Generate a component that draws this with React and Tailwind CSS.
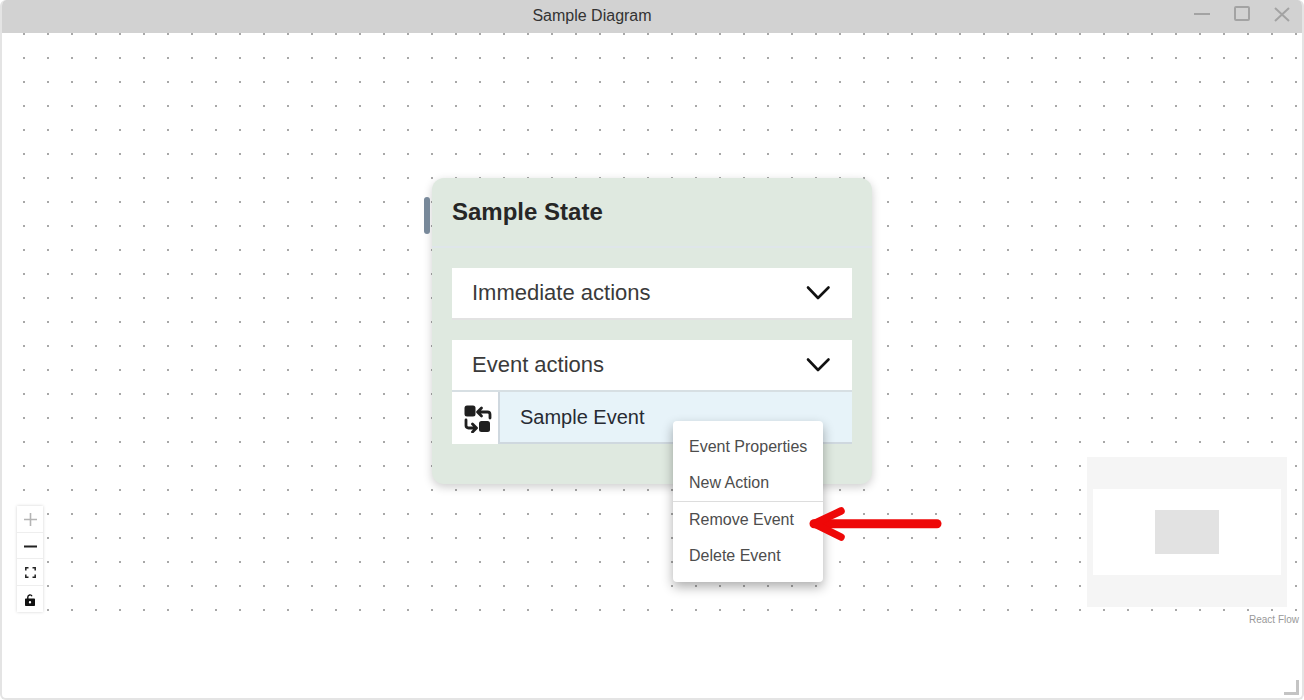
const font = { fontFamily: '"Liberation Sans", Arial, sans-serif' };

function Chevron() {
  return (
    <svg width="26" height="16" viewBox="0 0 26 16" fill="none" stroke="#111" strokeWidth="2.6" strokeLinecap="round" strokeLinejoin="round">
      <path d="M3 2.5 L13 13 L23.5 2.5" />
    </svg>
  );
}

function Accordion({ label, border }) {
  return (
    <div className={`flex h-[52px] items-center justify-between bg-white pl-5 pr-[21px] pb-[1px] border-b-2 ${border}`}>
      <span className="text-[22px] text-[#3a3a3a]">{label}</span>
      <Chevron />
    </div>
  );
}

function EventIcon() {
  return (
    <svg width="28" height="28" viewBox="0 0 28 28" fill="none">
      <rect x="0.5" y="0.5" width="11" height="11" rx="2.5" fill="#1f1f1f" />
      <rect x="15" y="16" width="11" height="11" rx="2.5" fill="#1f1f1f" />
      <path d="M17.5 3 L13.5 7 L17.5 11 M14 7 H23.5 Q26 7 26 9.5 V13" stroke="#1f1f1f" strokeWidth="2.8" strokeLinecap="round" strokeLinejoin="round" />
      <path d="M8.5 19 L12.5 23 L8.5 27 M12 23 H4.5 Q2 23 2 20.5 V15" stroke="#1f1f1f" strokeWidth="2.8" strokeLinecap="round" strokeLinejoin="round" />
    </svg>
  );
}

function MenuItem({ children }) {
  return <div className="flex h-9 items-center pl-4 text-base text-[#4d4d4d]">{children}</div>;
}

function Ctrl({ children, last }) {
  return (
    <div className={`flex h-[26.5px] w-[26px] items-center justify-center bg-white pt-[2px] ${last ? "" : "border-b border-[#eeeeee]"}`}>
      {children}
    </div>
  );
}

export default function App() {
  return (
    <div style={font} className="flex h-[700px] w-[1304px] flex-col overflow-hidden rounded-md border-x-2 border-b-2 border-[#e4e4e4] bg-white">
      <div className="relative flex h-[33px] shrink-0 items-center justify-center bg-[#d2d2d2] pr-[120px] text-base text-[#333333]">
        <span className="-translate-y-[1px]">Sample Diagram</span>
        <div className="absolute right-0 top-0 flex h-full items-center">
          <svg width="108" height="33" viewBox="0 0 108 33" fill="none" stroke="#a3a3a3" strokeWidth="2">
            <path d="M0 14 H16" />
            <rect x="41" y="7" width="14" height="13" rx="1" />
            <path d="M81 8 L95 21 M95 8 L81 21" />
          </svg>
        </div>
      </div>
      <div className="flex min-h-0 flex-1 flex-col">
        <div className="relative h-[593px] shrink-0 bg-white bg-[radial-gradient(circle_at_1px_1px,#a8a8a8_1.2px,transparent_1.2px)] bg-[length:24px_24px] bg-[position:21px_0px]">
          {/* node */}
          <div className="absolute left-[430px] top-[145px] h-[306px] w-[440px] rounded-xl bg-[#dfe9e0] shadow-[0_3px_10px_rgba(0,0,0,0.2)]">
            <div className="absolute -left-[8px] top-[19px] h-[37px] w-[6px] rounded-sm bg-[#78899a]" />
            <div className="flex h-[70px] items-start border-b-2 border-[#dfe6ea] px-5 pt-[19px]">
              <span className="text-2xl leading-[30px] font-bold text-[#262626]">Sample State</span>
            </div>
            <div className="flex flex-col gap-5 px-5 pt-[20px]">
              <Accordion label="Immediate actions" border="border-[#e2e2e2]" />
              <div className="flex flex-col">
                <Accordion label="Event actions" border="border-[#d7dfe3]" />
                <div className="flex h-[52px]">
                  <div className="flex w-[46px] items-start bg-white pl-3 pt-[13px]">
                    <EventIcon />
                  </div>
                  <div className="flex flex-1 items-center border-b-2 border-l-2 border-[#cfd8df] bg-[#e7f3f9] pl-5 text-xl text-[#272b33]">
                    Sample Event
                  </div>
                </div>
              </div>
            </div>
          </div>
          {/* context menu */}
          <div className="absolute left-[671px] top-[388px] w-[150px] rounded-[4px] bg-white py-[8px] shadow-[0_5px_12px_rgba(0,0,0,0.32)]">
            <MenuItem>Event Properties</MenuItem>
            <MenuItem>New Action</MenuItem>
            <div className="border-t border-[#dddddd]" />
            <MenuItem>Remove Event</MenuItem>
            <MenuItem>Delete Event</MenuItem>
          </div>
          {/* arrow */}
          <svg className="absolute left-[806px] top-[472px]" width="134" height="38" viewBox="0 0 134 38" fill="none" stroke="#ee0808" strokeLinecap="round" strokeLinejoin="round">
            <path d="M6 18.7 H129" strokeWidth="9" />
            <path d="M33 6 L6 18.7 L33 32" strokeWidth="7.5" />
          </svg>
          {/* controls */}
          <div className="absolute left-[15px] top-[473px] flex w-[26px] flex-col shadow-[0_0_3px_rgba(0,0,0,0.18)]">
            <Ctrl>
              <svg width="13" height="13" viewBox="0 0 13 13" stroke="#b4b4b4" strokeWidth="1.6"><path d="M6.5 0 V13 M0 6.5 H13" /></svg>
            </Ctrl>
            <Ctrl>
              <svg width="13" height="3" viewBox="0 0 13 3" stroke="#222" strokeWidth="1.8"><path d="M0 1.5 H13" /></svg>
            </Ctrl>
            <Ctrl>
              <svg width="11" height="11" viewBox="0 0 11 11" fill="none" stroke="#222" strokeWidth="1.5"><path d="M.8 3.5 V.8 H3.5 M7.5 .8 H10.2 V3.5 M10.2 7.5 V10.2 H7.5 M3.5 10.2 H.8 V7.5" /></svg>
            </Ctrl>
            <Ctrl last>
              <svg width="10" height="12" viewBox="0 0 10 12" fill="none"><path d="M2.8 5 V3 A2.2 2.2 0 0 1 7 2.2" stroke="#111" strokeWidth="1.4" /><path fillRule="evenodd" d="M.8 4.5 H9.2 Q10 4.5 10 5.3 V11.2 Q10 12 9.2 12 H.8 Q0 12 0 11.2 V5.3 Q0 4.5 .8 4.5 Z M5 7 A1.2 1.2 0 1 0 5 9.4 A1.2 1.2 0 1 0 5 7 Z" fill="#111" /></svg>
            </Ctrl>
          </div>
          {/* minimap */}
          <div className="absolute left-[1085px] top-[424px] flex h-[150px] w-[200px] items-center bg-[#f5f5f5]">
            <div className="flex h-[86px] w-[188px] translate-x-[6px] items-center justify-center bg-white">
              <div className="h-11 w-16 bg-[#e2e2e2]" />
            </div>
          </div>
          <div className="absolute right-[3px] top-[581px] text-[10px] leading-[12px] text-[#999999]">React Flow</div>
        </div>
        <div className="relative flex-1">
          <svg className="absolute bottom-[3px] right-[3px]" width="15" height="15" viewBox="0 0 15 15" fill="none" stroke="#c4c4c4" strokeWidth="3"><path d="M0 13.5 H13.5 V0" /></svg>
        </div>
      </div>
    </div>
  );
}
